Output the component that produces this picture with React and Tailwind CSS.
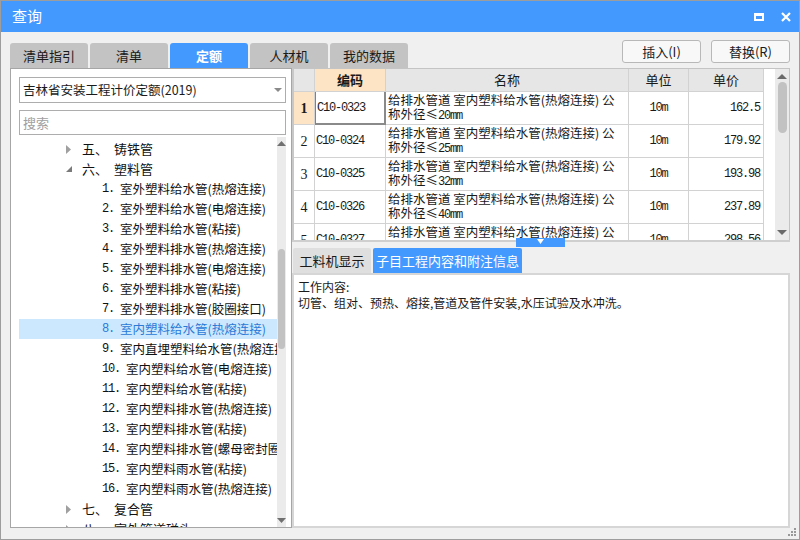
import React from "react";

const tree = [
  { lv: 1, open: false, no: "五、", text: "铸铁管" },
  { lv: 1, open: true, no: "六、", text: "塑料管" },
  { lv: 2, no: "1.", text: "室外塑料给水管(热熔连接)" },
  { lv: 2, no: "2.", text: "室外塑料给水管(电熔连接)" },
  { lv: 2, no: "3.", text: "室外塑料给水管(粘接)" },
  { lv: 2, no: "4.", text: "室外塑料排水管(热熔连接)" },
  { lv: 2, no: "5.", text: "室外塑料排水管(电熔连接)" },
  { lv: 2, no: "6.", text: "室外塑料排水管(粘接)" },
  { lv: 2, no: "7.", text: "室外塑料排水管(胶圈接口)" },
  { lv: 2, no: "8.", text: "室内塑料给水管(热熔连接)", active: true },
  { lv: 2, no: "9.", text: "室内直埋塑料给水管(热熔连接)" },
  { lv: 2, no: "10.", text: "室内塑料给水管(电熔连接)" },
  { lv: 2, no: "11.", text: "室内塑料给水管(粘接)" },
  { lv: 2, no: "12.", text: "室内塑料排水管(热熔连接)" },
  { lv: 2, no: "13.", text: "室内塑料排水管(粘接)" },
  { lv: 2, no: "14.", text: "室内塑料排水管(螺母密封圈连接)" },
  { lv: 2, no: "15.", text: "室内塑料雨水管(粘接)" },
  { lv: 2, no: "16.", text: "室内塑料雨水管(热熔连接)" },
  { lv: 1, open: false, no: "七、", text: "复合管" },
  { lv: 1, open: false, no: "八、", text: "室外管道碰头" },
];

const rows = [
  { n: "1", code: "C10-0323", size: "20", price: "162.5" },
  { n: "2", code: "C10-0324", size: "25", price: "179.92" },
  { n: "3", code: "C10-0325", size: "32", price: "193.98" },
  { n: "4", code: "C10-0326", size: "40", price: "237.89" },
  { n: "5", code: "C10-0327", size: "50", price: "298.56" },
];

const mono = "font-['Liberation_Mono',monospace] text-[12px] tracking-[-1.2px]";

function Caret({ open }) {
  return open ? (
    <svg width="6" height="6" viewBox="0 0 6 6">
      <path d="M6 0 L6 6 L0 6 Z" fill="#7a7a7a" />
    </svg>
  ) : (
    <svg width="5" height="9" viewBox="0 0 5 9">
      <path d="M0 0 L5 4.5 L0 9 Z" fill="#a0a0a0" />
    </svg>
  );
}

function TopTabs() {
  const tabs = ["清单指引", "清单", "定额", "人材机", "我的数据"];
  return (
    <div className="flex gap-[2px]">
      {tabs.map((t) => (
        <div
          key={t}
          className={`w-[78px] h-[25px] rounded-t-[3px] flex items-center justify-center text-[13px] ${
            t === "定额" ? "bg-[#4499ff] text-white font-bold" : "bg-[#c3c3c3] text-[#1a1a1a]"
          }`}
        >
          {t}
        </div>
      ))}
    </div>
  );
}

function Tree() {
  return (
    <div className="flex-1 min-h-0 flex mt-[2px] overflow-hidden">
      <div className="flex-1 pt-[2px] overflow-hidden">
        {tree.map((it, i) => (
          <div
            key={i}
            className={`h-[20px] flex items-center whitespace-nowrap text-[12.5px] ${
              it.active ? "bg-[#cce8ff] text-[#2a7ad6]" : "text-[#111]"
            } ${it.lv === 1 ? "pl-[47px]" : "pl-[83px]"}`}
          >
            {it.lv === 1 ? (
              <>
                <span className="w-[16px] flex items-center">
                  <Caret open={it.open} />
                </span>
                <span className="text-[13px]">{it.no}</span>
                <span className="w-[6px]" />
                <span className="text-[13px]">{it.text}</span>
              </>
            ) : (
              <>
                <span className={`${mono} whitespace-pre`}>{it.no + " "}</span>
                <span>{it.text}</span>
              </>
            )}
          </div>
        ))}
      </div>
      <div className="w-[9px] bg-[#ebebeb] flex flex-col items-center pt-[4px] pb-[4px]">
        <svg width="9" height="5" viewBox="0 0 9 5">
          <path d="M0 5 L4.5 0 L9 5 Z" fill="#707070" />
        </svg>
        <div className="mt-[103px] w-[7px] h-[100px] rounded-[4px] bg-[#c2c2c2]" />
        <div className="flex-1" />
        <svg width="9" height="5" viewBox="0 0 9 5">
          <path d="M0 0 L4.5 5 L9 0 Z" fill="#707070" />
        </svg>
      </div>
    </div>
  );
}

function Table() {
  const cols = "grid grid-cols-[21px_71px_243px_60px_75px]";
  const cell = "border-r border-b border-[#d2d2d2]";
  return (
    <div className="h-[172px] shrink-0 border-l-2 border-t border-r border-[#c4c4c4] border-l-[#c8c8c8] bg-white flex overflow-hidden">
      <div className="overflow-hidden">
        <div className={`${cols} h-[23px] text-[13px]`}>
          <div className={`${cell} bg-[#e6e6e6]`} />
          <div className={`${cell} bg-[#fde4c4] font-bold flex items-center justify-center`}>编码</div>
          <div className={`${cell} bg-[#e6e6e6] flex items-center justify-center`}>名称</div>
          <div className={`${cell} bg-[#e6e6e6] flex items-center justify-center`}>单位</div>
          <div className={`${cell} bg-[#e6e6e6] flex items-center justify-center`}>单价</div>
        </div>
        {rows.map((r, i) => (
          <div key={r.n} className={`${cols} h-[33px] text-[12.5px]`}>
            <div
              className={`${cell} flex items-center justify-center font-['Liberation_Serif',serif] text-[14px] ${
                i === 0 ? "bg-[#fde4c4] font-bold" : ""
              }`}
            >
              {r.n}
            </div>
            <div
              className={`${cell} flex items-center pl-[1px] ${mono} ${
                i === 0 ? "border-l border-l-[#3d8ff0] border-r-2 border-b-2 border-r-[#8a8a8a] border-b-[#8a8a8a]" : ""
              }`}
            >
              {r.code}
            </div>
            <div className={`${cell} flex flex-col justify-center pl-[2px] leading-[14px] whitespace-nowrap`}>
              <span>给排水管道 室内塑料给水管(热熔连接) 公</span>
              <span>
                称外径≤<span className={mono}>{r.size}mm</span>
              </span>
            </div>
            <div className={`${cell} flex items-center justify-center ${mono}`}>10m</div>
            <div className={`${cell} flex items-center justify-end pr-[3px] ${mono}`}>{r.price}</div>
          </div>
        ))}
      </div>
      <div className="w-[11px] bg-white" />
      <div className="w-[14px] bg-[#ebebeb] flex flex-col items-center pt-[5px] pb-[5px]">
        <svg width="10" height="5" viewBox="0 0 10 5">
          <path d="M0 5 L5 0 L10 5 Z" fill="#6a6a6a" />
        </svg>
        <div className="mt-[3px] w-[9px] h-[51px] rounded-[5px] bg-[#c2c2c2]" />
        <div className="flex-1" />
        <svg width="10" height="5" viewBox="0 0 10 5">
          <path d="M0 0 L5 5 L10 0 Z" fill="#6a6a6a" />
        </svg>
      </div>
    </div>
  );
}

export default function App() {
  return (
    <div className="relative w-[800px] h-[540px] bg-[#f0f0f0] border border-[#9d9d9d] flex flex-col overflow-hidden text-[12px] text-[#1a1a1a] font-['Noto_Sans_CJK_SC','Noto_Sans',sans-serif]">
      <div className="h-[31px] shrink-0 bg-[#4499ff] flex items-center justify-between pl-[11px] pr-[8px] text-white">
        <span className="text-[15px]">查询</span>
        <div className="flex items-center gap-[17px]">
          <div className="w-[10px] h-[8px] border-2 border-t-[3px] border-white" />
          <svg width="10" height="10" viewBox="0 0 10 10">
            <path d="M1 1 L9 9 M9 1 L1 9" stroke="white" strokeWidth="2.2" />
          </svg>
        </div>
      </div>

      <div className="flex-1 min-h-0 flex flex-col px-[9px] pt-[11px] pb-[11px]">
        <div className="h-[25px] shrink-0 flex justify-between">
          <TopTabs />
          <div className="flex gap-[10px] -mt-[3px]">
            <button className="w-[79px] h-[23px] border border-[#b8b8b8] rounded-[3px] bg-[#f8f8f8] text-[13px]">插入(I)</button>
            <button className="w-[79px] h-[23px] border border-[#b8b8b8] rounded-[3px] bg-[#f8f8f8] text-[13px]">替换(R)</button>
          </div>
        </div>

        <div className="flex-1 flex min-h-0">
          <div className="w-[282px] min-h-0 border border-[#a6a6a6] bg-white flex flex-col pl-[8px] pr-[5px] pt-[8px]">
            <div className="h-[26px] shrink-0 border border-[#adadad] flex items-center justify-between px-[3px] text-[12.5px]">
              <span>吉林省安装工程计价定额(2019)</span>
              <svg width="8" height="4" viewBox="0 0 8 4">
                <path d="M0 0 L8 0 L4 4 Z" fill="#8a8a8a" />
              </svg>
            </div>
            <div className="mt-[7px] h-[25px] shrink-0 border border-[#adadad] flex items-center px-[3px] text-[13px] text-[#a0a0a0]">
              搜索
            </div>
            <Tree />
          </div>

          <div className="flex-1 min-h-0 flex flex-col">
            <Table />
            <div className="relative h-[8px] shrink-0">
              <div className="h-[2px] bg-[#cfcfcf]" />
              <div className="absolute left-[224px] -top-[2px] w-[49px] h-[9px] bg-[#4499ff] flex justify-center items-start pt-[1px]">
                <svg width="7" height="5" viewBox="0 0 7 5">
                  <path d="M0 0 L7 0 L3.5 5 Z" fill="white" />
                </svg>
              </div>
            </div>
            <div className="h-[25px] shrink-0 flex gap-[2px] pl-[1px]">
              <div className="w-[78px] bg-[#dfdfdf] flex items-center justify-center text-[13px] rounded-t-[2px]">工料机显示</div>
              <div className="w-[149px] bg-[#4499ff] text-white flex items-center justify-center text-[13px] rounded-t-[2px]">
                子目工程内容和附注信息
              </div>
            </div>
            <div className="flex-1 min-h-0 border-2 border-[#d6d6d6] bg-white px-[4px] pt-[4px] leading-[16px] text-[12px]">
              <div>工作内容:</div>
              <div>切管、组对、预热、熔接,管道及管件安装,水压试验及水冲洗。</div>
            </div>
          </div>
        </div>
      </div>

      <svg className="absolute right-[2px] bottom-[2px]" width="9" height="9" viewBox="0 0 9 9">
        <rect x="6" y="0" width="2" height="2" fill="#999" />
        <rect x="3" y="3" width="2" height="2" fill="#999" />
        <rect x="6" y="3" width="2" height="2" fill="#999" />
        <rect x="0" y="6" width="2" height="2" fill="#999" />
        <rect x="3" y="6" width="2" height="2" fill="#999" />
        <rect x="6" y="6" width="2" height="2" fill="#999" />
      </svg>
    </div>
  );
}
